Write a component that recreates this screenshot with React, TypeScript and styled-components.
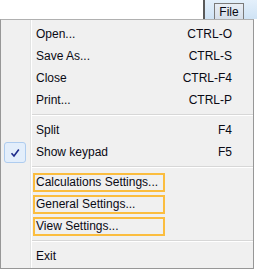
import React from 'react'
import { styled, createGlobalStyle } from 'styled-components'

const Global = createGlobalStyle`
  html, body {
    margin: 0;
    padding: 0;
    background: #fff;
  }
  body {
    width: 257px;
    height: 270px;
    overflow: hidden;
    font: 12px/1 "Liberation Sans", Arial, sans-serif;
    color: #0a0a14;
  }
`

const Page = styled.div`
  display: flex;
  flex-direction: column;
  width: 257px;
  height: 270px;
`

const TopBar = styled.div`
  display: flex;
  height: 19px;
`

const Blank = styled.div`
  flex: 1;
`

const TitleArea = styled.div`
  width: 43px;
  border-left: 2px solid #5a5a5a;
  background: linear-gradient(#e4f0fb, #cfe3f5);
  display: flex;
  align-items: flex-end;
  padding-left: 9px;
`

const FileButton = styled.div`
  width: 28px;
  height: 15px;
  border: 1px solid #7a7a7a;
  border-bottom: none;
  background: linear-gradient(#e9eef5, #d6dfea);
  display: flex;
  align-items: center;
  justify-content: center;
`

const Menu = styled.div`
  position: relative;
  width: 252px;
  border: 1px solid #979797;
  border-top-color: #b0b0b0;
  background: #f0f0f0;
  padding: 3px 0 1px;
  display: flex;
  flex-direction: column;
`

const Gutter = styled.div`
  position: absolute;
  top: 0;
  bottom: 0;
  left: 29px;
  width: 1px;
  background: #e2e3e3;
  border-right: 1px solid #fff;
`

const Row = styled.div`
  position: relative;
  display: flex;
  align-items: center;
  height: 22px;
  padding-left: 31px;
  padding-right: 21px;
`

const Label = styled.span<{ $boxed?: boolean }>`
  flex: 1;
  display: flex;
  align-items: center;
  ${p =>
    p.$boxed
      ? `
    flex: none;
    height: 15px;
    width: 127px;
    margin-left: 1px;
    padding-left: 1px;
    border: 2px solid #fbbd3f;
  `
      : `padding-left: 4px;`}
`

const Shortcut = styled.span`
  margin-left: auto;
`

const Separator = styled.div`
  height: 8px;
  display: flex;
  align-items: center;
  padding-left: 31px;
  &::after {
    content: '';
    flex: 1;
    height: 1px;
    background: #d7d7d7;
    border-bottom: 1px solid #fff;
  }
`

const Check = styled.div`
  position: absolute;
  left: 3px;
  top: 1px;
  width: 20px;
  height: 19px;
  border: 1px solid #aeccef;
  border-radius: 3px;
  background: #e3eefb;
  display: flex;
  align-items: center;
  justify-content: center;
`

type Item = { label: string; shortcut?: string; boxed?: boolean; checked?: boolean }

const groups: Item[][] = [
  [
    { label: 'Open...', shortcut: 'CTRL-O' },
    { label: 'Save As...', shortcut: 'CTRL-S' },
    { label: 'Close', shortcut: 'CTRL-F4' },
    { label: 'Print...', shortcut: 'CTRL-P' },
  ],
  [
    { label: 'Split', shortcut: 'F4' },
    { label: 'Show keypad', shortcut: 'F5', checked: true },
  ],
  [
    { label: 'Calculations Settings...', boxed: true },
    { label: 'General Settings...', boxed: true },
    { label: 'View Settings...', boxed: true },
  ],
  [{ label: 'Exit' }],
]

export default function App() {
  return (
    <Page>
      <Global />
      <TopBar>
        <Blank />
        <TitleArea>
          <FileButton>File</FileButton>
        </TitleArea>
      </TopBar>
      <Menu>
        <Gutter />
        {groups.map((g, gi) => (
          <React.Fragment key={gi}>
            {gi > 0 && <Separator />}
            {g.map(item => (
              <Row key={item.label}>
                {item.checked && (
                  <Check>
                    <svg width="10" height="10" viewBox="0 0 10 10">
                      <path d="M1.5 5.2 L4 8 L8.8 1.5" fill="none" stroke="#1d2a8a" strokeWidth="1.6" />
                    </svg>
                  </Check>
                )}
                <Label $boxed={item.boxed}>{item.label}</Label>
                {item.shortcut && <Shortcut>{item.shortcut}</Shortcut>}
              </Row>
            ))}
          </React.Fragment>
        ))}
      </Menu>
    </Page>
  )
}
